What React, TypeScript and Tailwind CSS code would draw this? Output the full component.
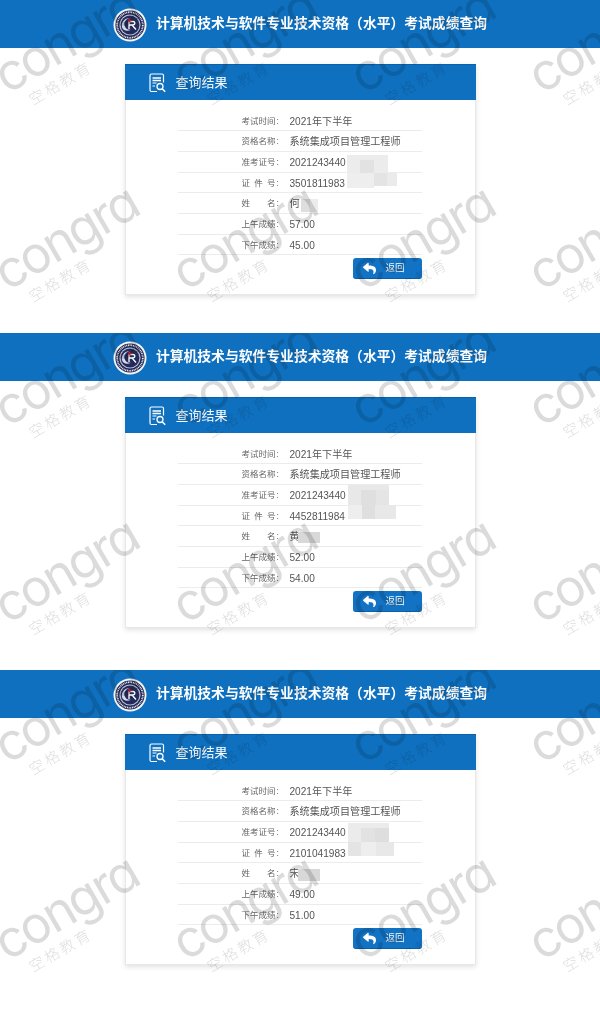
import React from "react";
import { FaReply } from "react-icons/fa";

const records = [
  {
    height: "h-[333px]",
    id: "3501811983",
    name: "何",
    am: "57.00",
    pm: "45.00",
    mosaic: [
      [221, 55, 27, 33, "#eeeeee"],
      [221, 55, 41, 18, "#ececec"],
      [234, 60, 14, 13, "#e2e2e2"],
      [248, 73, 13, 13, "#e4e4e4"],
      [261, 73, 10, 13, "#ebebeb"],
      [175, 99, 9, 13, "#dedede"],
      [184, 99, 8, 13, "#ececec"],
    ],
  },
  {
    height: "h-[337px]",
    id: "4452811984",
    name: "黄",
    am: "52.00",
    pm: "54.00",
    mosaic: [
      [222, 52, 41, 20, "#e8e8e8"],
      [235, 57, 15, 15, "#dfdfdf"],
      [250, 57, 13, 15, "#e5e5e5"],
      [222, 72, 14, 14, "#eeeeee"],
      [236, 72, 13, 14, "#dfdfdf"],
      [249, 72, 21, 14, "#e8e8e8"],
      [172, 99, 22, 11, "#d8d8d8"],
    ],
  },
  {
    height: "h-[358px]",
    id: "2101041983",
    name: "宋",
    am: "49.00",
    pm: "51.00",
    mosaic: [
      [222, 53, 41, 19, "#ebebeb"],
      [235, 58, 14, 14, "#e2e2e2"],
      [249, 58, 14, 14, "#dedede"],
      [222, 72, 13, 14, "#e4e4e4"],
      [235, 72, 15, 14, "#eeeeee"],
      [250, 72, 18, 14, "#e8e8e8"],
      [172, 99, 22, 12, "#d8d8d8"],
    ],
  },
];

const Logo = () => (
  <svg width="34" height="34" viewBox="0 0 34 34" className="shrink-0">
    <circle cx="17" cy="17" r="16.5" fill="#f4f5f8" />
    <circle cx="17" cy="17" r="14.6" fill="#1c2350" />
    <circle cx="17" cy="17" r="12.8" fill="none" stroke="#e8e9f0" strokeWidth="1.8" strokeDasharray="1 0.7" />
    <circle cx="17" cy="17" r="10.6" fill="#b9bdd0" />
    <circle cx="17" cy="17" r="9.4" fill="#232b5c" />
    <path d="M9 19c-1-5 3-9 7.500-9-3 1-6 3.500-5 7.500 .8 3 3.500 4.800 6.500 4.200-3.500 2-8 1.300-9-2.700z" fill="#d7dae6" />
    <path d="M16 13v8M16 13.500h4c2.500 0 2.500 3.500-.5 3.500H16M19 17l4 4.500" fill="none" stroke="#fff" strokeWidth="1.300" />
    <path d="M15.500 10.500l4 2-4 2z" fill="#d5232c" />
  </svg>
);

const DocIcon = () => (
  <svg width="18" height="20" viewBox="0 0 18 20" fill="none" stroke="#fff" className="shrink-0">
    <path d="M8 18.500H2.500a1.500 1.500 0 0 1-1.500-1.500V2.500A1.500 1.500 0 0 1 2.500 1h10.500a1.500 1.500 0 0 1 1.500 1.500v7" strokeWidth="1.200" />
    <path d="M3.500 5h8.500M3.500 7.500h8.500" strokeWidth="1.300" />
    <path d="M3.500 10h4M3.500 13h2.500" strokeWidth="1" />
    <circle cx="11" cy="13.500" r="3" strokeWidth="1.300" />
    <path d="M13.200 15.700l3 3" strokeWidth="1.600" />
  </svg>
);

const Watermarks = () => (
  <div className="pointer-events-none absolute inset-0 grid grid-cols-[repeat(4,178px)] auto-rows-[197px] overflow-hidden">
    {Array.from({ length: 8 }).map((_, i) => (
      <div key={i} className="relative">
        <span className="absolute left-[-2px] top-[49px] origin-left -rotate-30 whitespace-nowrap font-['Inter',sans-serif] text-[51px] leading-[60px] font-normal tracking-[-2.500px] text-black/[0.14] [font-feature-settings:'cv11']">
          congra
        </span>
        <span className="absolute left-[30px] top-[90px] origin-left -rotate-30 whitespace-nowrap font-['Noto_Sans_CJK_SC',sans-serif] text-[15px] leading-[20px] font-light tracking-[2.500px] text-black/[0.14]">
          空格教育
        </span>
      </div>
    ))}
  </div>
);

const Row = ({ label, children }: { label: string[]; children: React.ReactNode }) => (
  <div className="flex h-[20.7px] items-center border-b border-[#ececec] pt-[1.500px]">
    <div className="ml-[64px] flex w-[34px] justify-between text-[8.500px] text-[#666]">
      {label.map((c) => (
        <span key={c}>{c}</span>
      ))}
    </div>
    <span className="ml-[1px] w-[3px] text-[8.500px] text-[#666]">:</span>
    <div className="ml-[10px] text-[10.100px] text-[#555]">{children}</div>
  </div>
);

const ResultBlock = ({ data }: { data: (typeof records)[number] }) => (
  <div className={`relative ${data.height}`}>
    <div className="flex h-[48px] items-center justify-center gap-[9px] bg-[#0f70bf] pt-[1px]">
      <Logo />
      <h1 className="text-[13.800px] font-bold text-white">计算机技术与软件专业技术资格（水平）考试成绩查询</h1>
    </div>
    <div className="mx-auto mt-[16px] w-[351px] shadow-[0_2px_5px_rgba(0,0,0,0.12)]">
      <div className="flex h-[36px] items-center gap-[9px] border-t border-[#0a62ad] bg-[#0f70bf] pl-[24px]">
        <DocIcon />
        <span className="text-[13px] text-white">查询结果</span>
      </div>
      <div className="relative h-[195px] border-x border-b border-[#e8e8e8] bg-white pt-[10.500px]">
        <div className="ml-[52px] w-[244px]">
          <Row label={["考", "试", "时", "间"]}>2021年下半年</Row>
          <Row label={["资", "格", "名", "称"]}>系统集成项目管理工程师</Row>
          <Row label={["准", "考", "证", "号"]}>2021243440</Row>
          <Row label={["证", "件", "号"]}>{data.id}</Row>
          <Row label={["姓", "名"]}>{data.name}</Row>
          <Row label={["上", "午", "成", "绩"]}>{data.am}</Row>
          <Row label={["下", "午", "成", "绩"]}>{data.pm}</Row>
          <div className="mt-[3px] flex justify-end">
            <button className="flex h-[21px] w-[69px] items-center rounded-[3px] border-b border-[#0a5ea6] bg-[#1272c4] pl-[10px] text-[9.500px] text-white">
              <FaReply className="text-[13px]" />
              <span className="ml-[10px]">返回</span>
            </button>
          </div>
        </div>
        <svg className="pointer-events-none absolute inset-0 blur-[0.6px]" width="351" height="195">
          {data.mosaic.map(([x, y, w, h, fill], i) => (
            <rect key={i} x={x} y={y} width={w} height={h} fill={fill as string} />
          ))}
        </svg>
      </div>
    </div>
    <Watermarks />
  </div>
);

export default function App() {
  return (
    <div className="h-[1028px] w-[600px] overflow-hidden bg-white blur-[0.35px] font-['Liberation_Sans','Noto_Sans_CJK_SC',sans-serif]">
      {records.map((r) => (
        <ResultBlock key={r.id} data={r} />
      ))}
    </div>
  );
}
